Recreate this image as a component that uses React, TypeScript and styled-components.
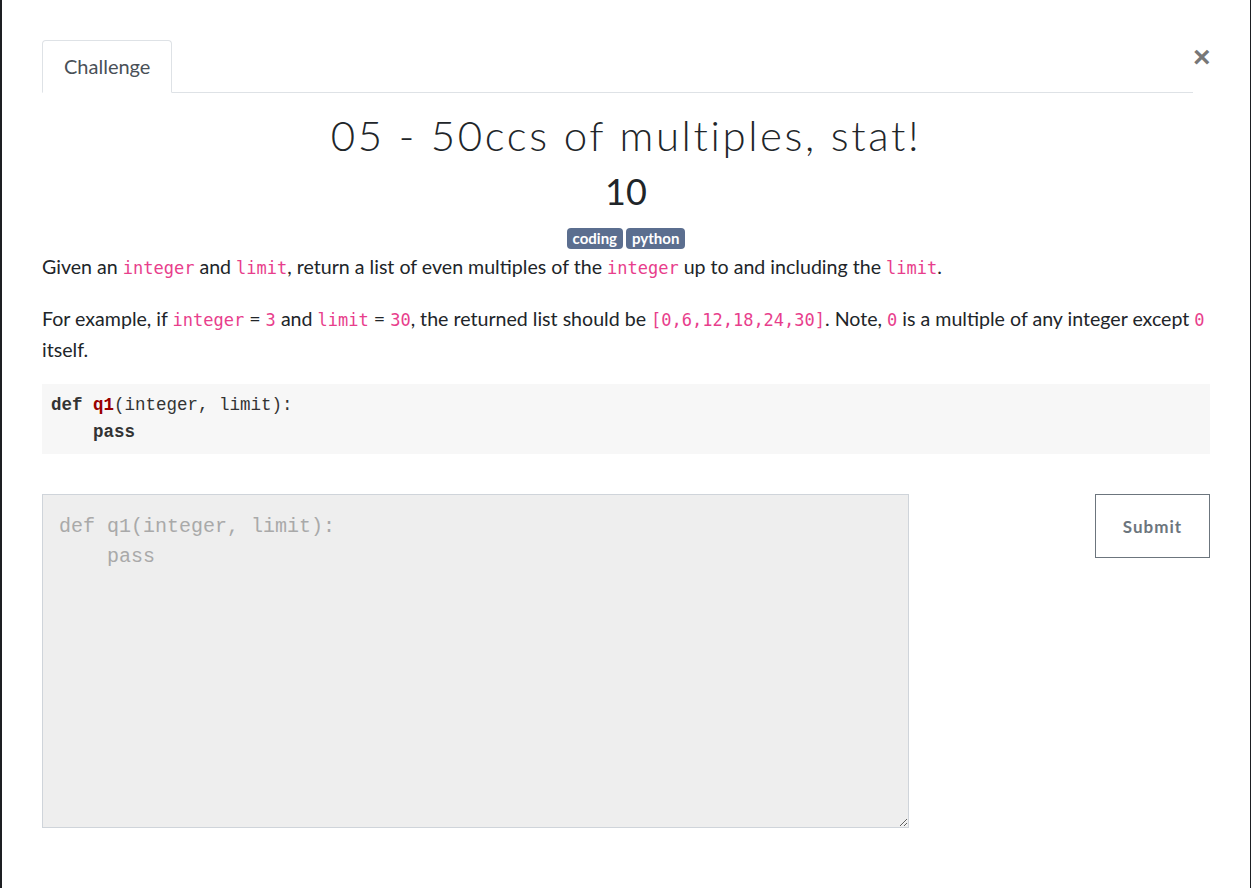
import React from "react";
import styled, { createGlobalStyle } from "styled-components";

const GlobalStyle = createGlobalStyle`
  html, body {
    margin: 0;
    padding: 0;
    background: #1d1f23;
  }
  body {
    font-family: "Lato", "Liberation Sans", sans-serif;
    color: #212529;
  }
`;

const Modal = styled.div`
  margin-left: 2px;
  width: 1248px;
  min-height: 888px;
  background: #fff;
  box-sizing: border-box;
  padding: 40px 40px 0 40px;
`;

const Header = styled.div`
  display: flex;
  align-items: flex-start;
`;

const Tabs = styled.div`
  flex: 1;
  display: flex;
  border-bottom: 1px solid #dee2e6;
`;

const Tab = styled.div`
  margin-bottom: -1px;
  padding: 0 21px;
  height: 51px;
  line-height: 50px;
  border: 1px solid #dee2e6;
  border-bottom-color: #fff;
  border-radius: 4px 4px 0 0;
  font-size: 20px;
  color: #495057;
  background: #fff;
`;

const Close = styled.button`
  width: 17px;
  padding: 0;
  border: none;
  background: none;
  color: #777;
  font-family: "Liberation Sans", sans-serif;
  font-size: 30px;
  font-weight: 700;
  line-height: 30px;
  margin-top: 2px;
  cursor: pointer;
`;

const Title = styled.h3`
  margin: 17px 0 0;
  text-align: center;
  font-weight: 300;
  font-size: 42px;
  line-height: 50px;
  letter-spacing: 2.6px;
`;

const Points = styled.h4`
  margin: 9px 0 0;
  text-align: center;
  font-weight: 400;
  font-size: 36px;
  line-height: 44px;
`;

const Tags = styled.div`
  display: flex;
  justify-content: center;
  gap: 3px;
  margin-top: 15px;
`;

const Badge = styled.span`
  display: inline-block;
  padding: 0 6px;
  height: 21px;
  line-height: 21px;
  border-radius: 4px;
  background: #5b6e8f;
  color: #fff;
  font-size: 15px;
  font-weight: 700;
`;

const Description = styled.div`
  font-size: 19.6px;
  line-height: 30px;
  margin-top: 3px;
`;

const Para = styled.p`
  margin: 0 0 21px;
  &:last-of-type {
    margin-bottom: 19px;
  }
`;

const Code = styled.code`
  font-family: "DejaVu Sans Mono", monospace;
  font-size: 17px;
  color: #e83e8c;
`;

const Pre = styled.pre`
  margin: 0;
  padding: 8px 9px;
  background: #f7f7f7;
  font-family: "Liberation Mono", monospace;
  font-size: 17.5px;
  line-height: 27px;
  color: #333;
`;

const Keyword = styled.span<{ $red?: boolean }>`
  font-weight: 700;
  color: ${(p) => (p.$red ? "#990000" : "#333")};
`;

const AnswerRow = styled.div`
  display: grid;
  grid-template-columns: 867px 1fr;
  margin-top: 40px;
`;

const Editor = styled.textarea`
  box-sizing: border-box;
  width: 867px;
  height: 334px;
  margin: 0;
  padding: 17px 16px 14px;
  background: #eeeeee;
  border: 1px solid #cfd4da;
  border-radius: 0;
  font-family: "Liberation Mono", monospace;
  font-size: 20px;
  line-height: 30px;
  color: #333;
  resize: vertical;
  &::placeholder {
    color: #a9a9a9;
  }
`;

const SubmitButton = styled.button`
  justify-self: end;
  width: 115px;
  height: 64px;
  background: #fff;
  border: 1px solid #6c757d;
  border-radius: 0;
  color: #6c757d;
  font-family: "Lato", sans-serif;
  font-size: 17px;
  font-weight: 700;
  letter-spacing: 1px;
  cursor: pointer;
`;

export default function App() {
  return (
    <>
      <GlobalStyle />
      <Modal>
        <Header>
          <Tabs>
            <Tab>Challenge</Tab>
          </Tabs>
          <Close aria-label="Close">×</Close>
        </Header>
        <Title>05 - 50ccs of multiples, stat!</Title>
        <Points>10</Points>
        <Tags>
          <Badge>coding</Badge>
          <Badge>python</Badge>
        </Tags>
        <Description>
          <Para>
            Given an <Code>integer</Code> and <Code>limit</Code>, return a list of even multiples of
            the <Code>integer</Code> up to and including the <Code>limit</Code>.
          </Para>
          <Para>
            For example, if <Code>integer</Code> = <Code>3</Code> and <Code>limit</Code> ={" "}
            <Code>30</Code>, the returned list should be <Code>[0,6,12,18,24,30]</Code>. Note,{" "}
            <Code>0</Code> is a multiple of any integer except <Code>0</Code> itself.
          </Para>
          <Pre>
            <Keyword>def</Keyword> <Keyword $red>q1</Keyword>(integer, limit):{"\n"}
            {"    "}
            <Keyword>pass</Keyword>
          </Pre>
        </Description>
        <AnswerRow>
          <Editor placeholder={"def q1(integer, limit):\n    pass"} />
          <SubmitButton>Submit</SubmitButton>
        </AnswerRow>
      </Modal>
    </>
  );
}
